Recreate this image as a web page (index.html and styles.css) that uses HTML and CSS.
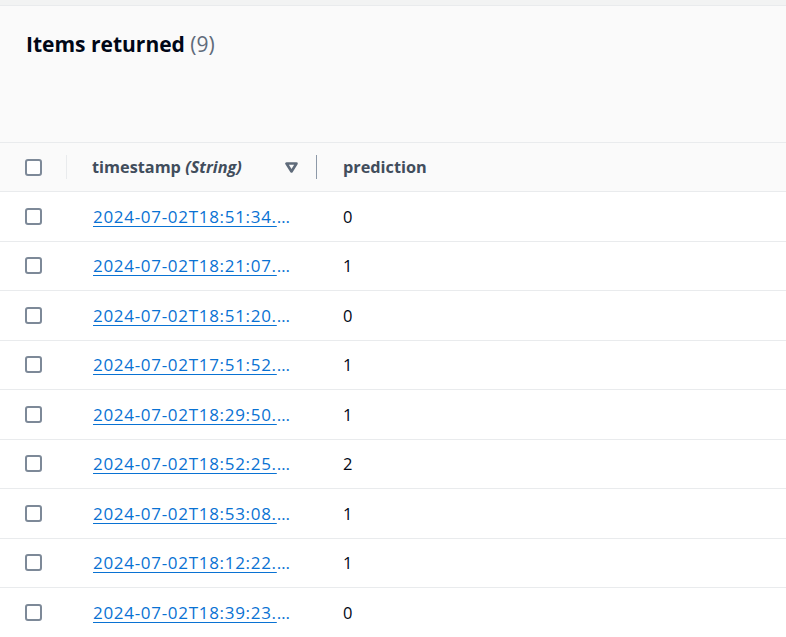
FILE: index.html
```html
<!DOCTYPE html>
<html lang="en">
<head>
<meta charset="utf-8">
<title>Items returned</title>
<link rel="stylesheet" href="styles.css">
</head>
<body>
<div class="topbar"></div>
<div class="panel-head">
  <h2 class="title">Items returned <span class="count">(9)</span></h2>
</div>
<div class="table">
  <div class="row head">
    <div class="cell cb"><span class="box"></span></div>
    <div class="cell col-ts">
      <span class="sep light"></span>
      <span class="th-text">timestamp <em>(String)</em></span>
      <svg class="sort" width="13" height="11" viewBox="0 0 13 11"><polygon points="1.5,1.5 11.5,1.5 6.5,9.5" fill="none" stroke="#5f6b7a" stroke-width="2.6" stroke-linejoin="round"/></svg>
      <span class="sep dark"></span>
    </div>
    <div class="cell col-pred"><span class="th-text">prediction</span></div>
  </div>
  <div class="row"><div class="cell cb"><span class="box"></span></div><div class="cell col-ts"><a class="link" href="#">2024-07-02T18:51:34.123Z</a></div><div class="cell col-pred">0</div></div>
  <div class="row"><div class="cell cb"><span class="box"></span></div><div class="cell col-ts"><a class="link" href="#">2024-07-02T18:21:07.123Z</a></div><div class="cell col-pred">1</div></div>
  <div class="row"><div class="cell cb"><span class="box"></span></div><div class="cell col-ts"><a class="link" href="#">2024-07-02T18:51:20.123Z</a></div><div class="cell col-pred">0</div></div>
  <div class="row"><div class="cell cb"><span class="box"></span></div><div class="cell col-ts"><a class="link" href="#">2024-07-02T17:51:52.123Z</a></div><div class="cell col-pred">1</div></div>
  <div class="row"><div class="cell cb"><span class="box"></span></div><div class="cell col-ts"><a class="link" href="#">2024-07-02T18:29:50.123Z</a></div><div class="cell col-pred">1</div></div>
  <div class="row"><div class="cell cb"><span class="box"></span></div><div class="cell col-ts"><a class="link" href="#">2024-07-02T18:52:25.123Z</a></div><div class="cell col-pred">2</div></div>
  <div class="row"><div class="cell cb"><span class="box"></span></div><div class="cell col-ts"><a class="link" href="#">2024-07-02T18:53:08.123Z</a></div><div class="cell col-pred">1</div></div>
  <div class="row"><div class="cell cb"><span class="box"></span></div><div class="cell col-ts"><a class="link" href="#">2024-07-02T18:12:22.123Z</a></div><div class="cell col-pred">1</div></div>
  <div class="row"><div class="cell cb"><span class="box"></span></div><div class="cell col-ts"><a class="link" href="#">2024-07-02T18:39:23.123Z</a></div><div class="cell col-pred">0</div></div>
</div>
</body>
</html>
```
FILE: styles.css
```css
html, body {
  margin: 0;
  padding: 0;
  background: #ffffff;
  font-family: "Open Sans", "Noto Sans", sans-serif;
  color: #000716;
}
.topbar {
  height: 5px;
  background: #f2f3f3;
  border-bottom: 1px solid #e9ebed;
}
.panel-head {
  height: 137px;
  box-sizing: border-box;
  background: #fafafa;
  border-bottom: 1px solid #e9ebed;
  padding: 25px 0 0 26px;
}
.title {
  margin: 0;
  font-size: 21px;
  line-height: 26px;
  font-weight: 700;
  color: #000716;
}
.count {
  font-weight: 400;
  color: #5f6b7a;
}
.table {
  display: flex;
  flex-direction: column;
}
.row {
  display: grid;
  grid-template-columns: 67px 250px 1fr;
  height: 49.5px;
  box-sizing: border-box;
  border-bottom: 1px solid #e9ebed;
  align-items: center;
  font-size: 16.5px;
}
.row.head {
  height: 49px;
  background: #fafafa;
  font-size: 16.3px;
}
.cell {
  display: flex;
  align-items: center;
  height: 100%;
  min-width: 0;
}
.cb {
  padding-left: 25px;
}
.box {
  width: 17px;
  height: 17px;
  box-sizing: border-box;
  border: 2px solid #7d8998;
  border-radius: 3px;
  background: #fff;
}
.col-ts {
  position: relative;
  padding: 0 26px 0 25px;
}
.col-pred {
  padding-left: 26px;
}
.head .cell {
  font-weight: 700;
  color: #414d5c;
}
.th-text em {
  font-style: italic;
}
.sep {
  position: absolute;
  top: 12px;
  width: 1px;
  height: 24px;
}
.sep.light {
  left: -1px;
  background: #e9ebed;
}
.sep.dark {
  right: 0;
  background: #8d99a8;
}
.sort {
  margin-left: auto;
  margin-right: -7px;
}
.link {
  display: block;
  overflow: hidden;
  white-space: nowrap;
  text-overflow: ellipsis;
  padding-left: 1px;
  color: #0972d3;
  font-size: 17px;
  letter-spacing: 0.7px;
  text-decoration: underline;
  text-underline-offset: 3px;
}
```
